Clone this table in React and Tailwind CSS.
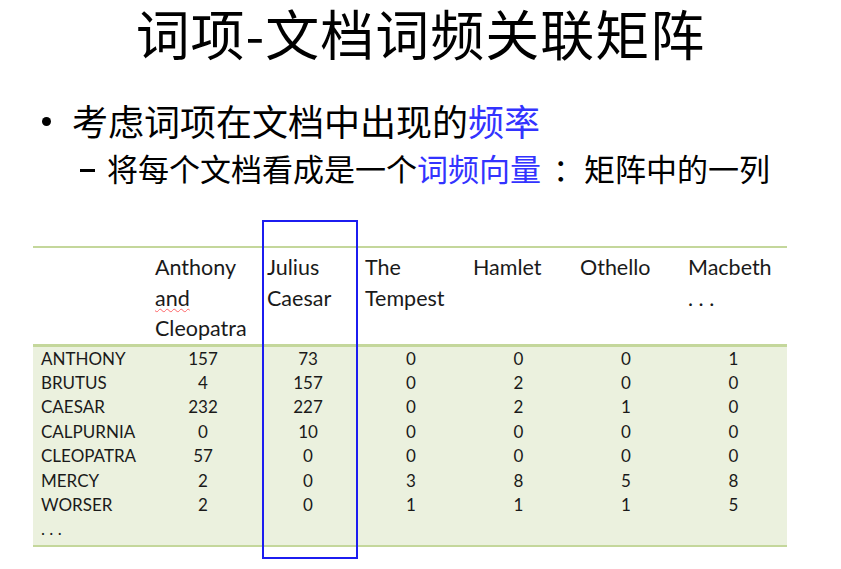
import React from 'react';

const cols = ['Anthony and Cleopatra', 'Julius Caesar', 'The Tempest', 'Hamlet', 'Othello', 'Macbeth'];

const rows = [
  ['ANTHONY', 157, 73, 0, 0, 0, 1],
  ['BRUTUS', 4, 157, 0, 2, 0, 0],
  ['CAESAR', 232, 227, 0, 2, 1, 0],
  ['CALPURNIA', 0, 10, 0, 0, 0, 0],
  ['CLEOPATRA', 57, 0, 0, 0, 0, 0],
  ['MERCY', 2, 0, 3, 8, 5, 8],
  ['WORSER', 2, 0, 1, 1, 1, 5],
];

const widths = ['w-[114px]', 'w-[112px]', 'w-[98px]', 'w-[108px]', 'w-[107px]', 'w-[108px]', 'w-[107px]'];

export default function App() {
  return (
    <div className="w-[841px] h-[569px] bg-white overflow-hidden font-['Noto_Sans_CJK_SC',sans-serif] text-black">
      {/* 标题 */}
      <div className="pt-[1px]">
        <h1 className="text-center text-[54px] leading-[78px] tracking-[1px] -mt-[7px]">
          词项-文档词频关联矩阵
        </h1>
      </div>

      {/* 要点 */}
      <div className="mt-[26px] pl-[42px]">
        <div className="flex items-center h-[44px] text-[36px] leading-[44px]">
          <span className="w-[9px] h-[9px] rounded-full bg-black mr-[21px] mt-[2px]"></span>
          <span>
            考虑词项在文档中出现的<span className="text-[#3333ff]">频率</span>
          </span>
        </div>
        <div className="flex items-center h-[40px] mt-[6px] pl-[38px] text-[31px] leading-[40px]">
          <span className="w-[15px] h-[3px] bg-black mr-[12px] mt-[4px]"></span>
          <span>
            将每个文档看成是一个<span className="text-[#3333ff]">词频向量</span>
            <span className="ml-[12px]">：</span>矩阵中的一列
          </span>
        </div>
      </div>

      {/* 矩阵 */}
      <div className="relative ml-[33px] mt-[58px] w-[754px] font-['Lato','Liberation_Sans',sans-serif] text-[#1a1a1a]">
        <table className="table-fixed border-collapse w-[754px]">
          <thead>
            <tr className="border-t-2 border-[#c4d79b] h-[98px]">
              <th className={`${widths[0]}`}></th>
              {cols.map((c, i) => (
                <th key={c} className={`${widths[i + 1]} align-top text-left font-normal pl-2 pt-[4px] text-[21.5px] leading-[30.5px]`}>
                  {c === 'Anthony and Cleopatra' ? (
                    <>
                      Anthony<br />
                      <span className="underline decoration-wavy decoration-red-400 decoration-1 underline-offset-2">and</span>
                      <br />Cleopatra
                    </>
                  ) : c === 'Macbeth' ? (
                    <>Macbeth<br />. . .</>
                  ) : (
                    c.split(' ').map((w, k) => (
                      <React.Fragment key={k}>{k > 0 && <br />}{w}</React.Fragment>
                    ))
                  )}
                </th>
              ))}
            </tr>
          </thead>
          <tbody className="bg-[#ebf1de] border-t-[3px] border-b-2 border-[#c4d79b] text-[17px]">
            {rows.map((r) => (
              <tr key={r[0]} className="h-[24.4px] leading-[24.4px]">
                <td className="pl-2 p-0">{r[0]}</td>
                {r.slice(1).map((v, i) => (
                  <td key={i} className="text-center p-0">{v}</td>
                ))}
              </tr>
            ))}
            <tr className="h-[29px] align-top leading-[24px]">
              <td className="pl-2">. . .</td>
              <td colSpan={6}></td>
            </tr>
          </tbody>
        </table>

        {/* 蓝色高亮框 */}
        <div className="absolute left-[229px] top-[-26px] w-[96px] h-[339px] border-2 border-[#1c1cf0] pointer-events-none"></div>
      </div>
    </div>
  );
}
